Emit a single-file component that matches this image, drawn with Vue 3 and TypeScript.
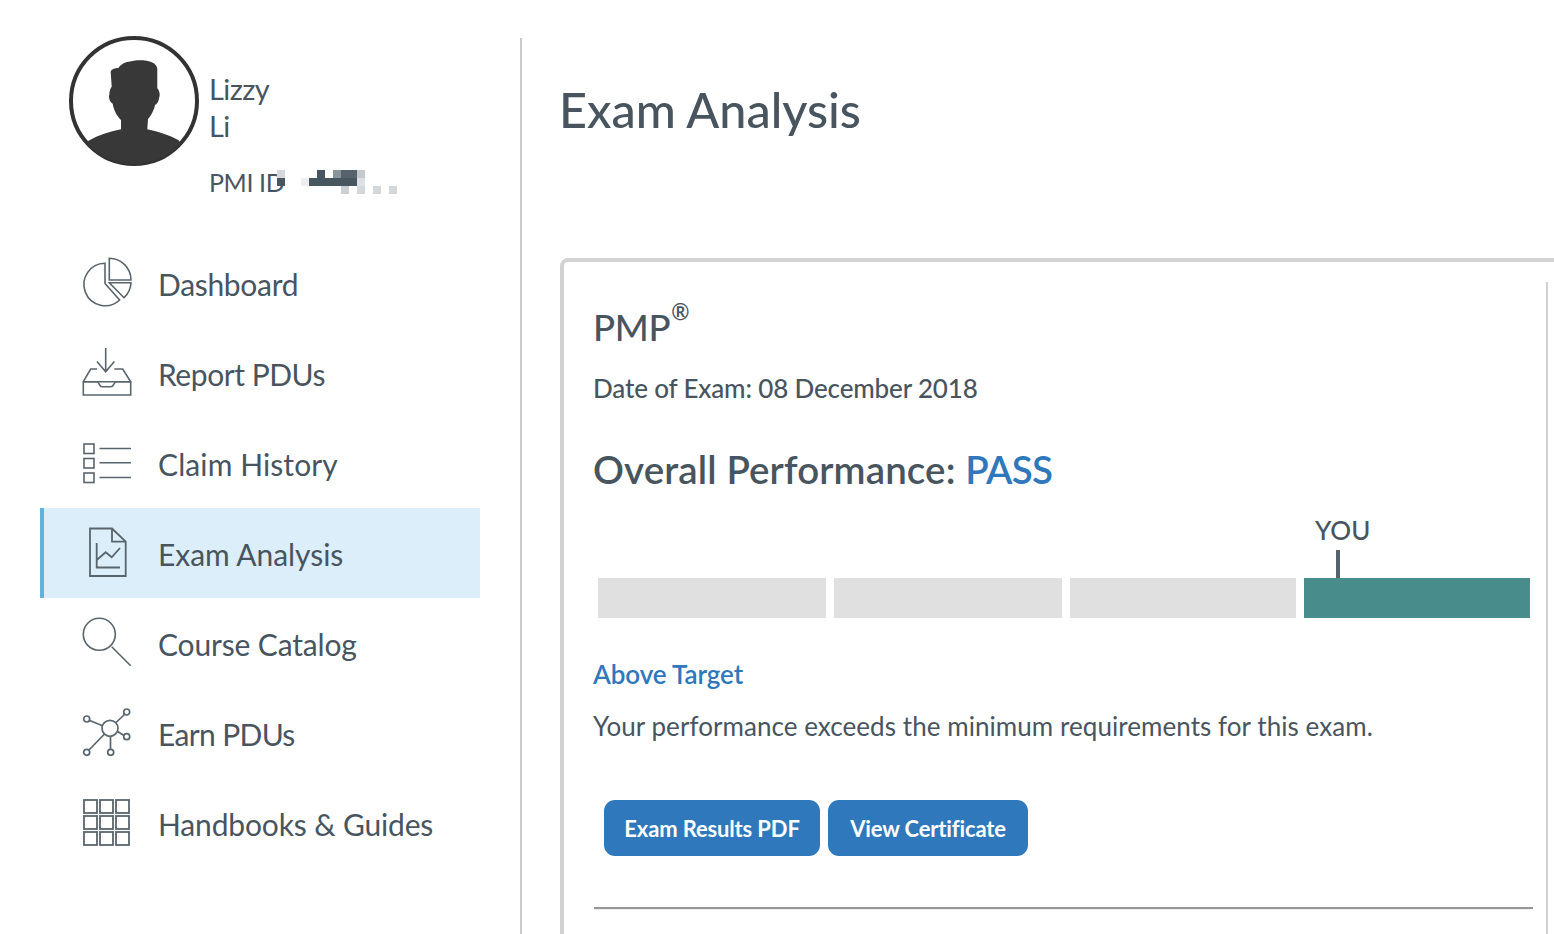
<script setup lang="ts">
interface NavItem { label: string; icon: string; spacing: number; active?: boolean }
const nav: NavItem[] = [
  { label: 'Dashboard', icon: 'pie', spacing: -0.3 },
  { label: 'Report PDUs', icon: 'inbox', spacing: -0.45 },
  { label: 'Claim History', icon: 'list', spacing: 0.1 },
  { label: 'Exam Analysis', icon: 'doc', spacing: -0.05, active: true },
  { label: 'Course Catalog', icon: 'search', spacing: -0.15 },
  { label: 'Earn PDUs', icon: 'net', spacing: -0.65 },
  { label: 'Handbooks & Guides', icon: 'grid', spacing: -0.15 },
]
const pixels = [
  [0, 0, 8, 8, '#d5d9dd'], [0, 8, 8, 8, '#48565f'], [24, 8, 8, 8, '#eceef0'],
  [32, 8, 24, 8, '#48565f'], [40, 0, 8, 8, '#48565f'], [56, 8, 8, 8, '#48565f'], [56, 0, 8, 8, '#8a949b'],
  [64, 0, 16, 8, '#56636c'], [64, 8, 16, 8, '#48565f'], [80, 0, 8, 8, '#c4c9cd'], [80, 8, 8, 8, '#dde0e2'],
  [64, 16, 8, 8, '#ccd0d3'], [80, 16, 8, 8, '#d5d8da'], [96, 16, 8, 8, '#d5d8da'], [112, 16, 8, 8, '#d5d8da'],
] as [number, number, number, number, string][]
</script>

<template>
  <div class="page">
    <aside class="side">
      <div class="profile">
        <svg class="avatar" viewBox="0 0 130 130" width="130" height="130">
          <defs><clipPath id="av"><circle cx="65" cy="65" r="63" /></clipPath></defs>
          <circle cx="65" cy="65" r="63" fill="#fff" stroke="#333" stroke-width="4" />
          <path clip-path="url(#av)" fill="#383838" d="M41.700 36C42 33 46 32 49.300 32C53 27 57 26 61 25.500C67 24 72 24 77.700 24.700C83 25.500 88 28 88.300 33L88.300 52.300C91 55 91 60 90.300 61C90 65 88 68 86 69C85 74 82 80 79 83L78.300 93.300C90 96 100 99 109.300 104L130 130L0 130L19.500 104.700C30 99 40 96 52 93.300L52 84C48 80 45 75 43.700 67.700C40 66 39.500 60 40.300 59C40.300 55 41.500 52 42.700 50.700Z" />
        </svg>
        <div class="who">
          <div class="name">Lizzy</div>
          <div class="name">Li</div>
        </div>
        <div class="pmi">
          <span>PMI ID</span>
          <svg class="mosaic" width="120" height="24" viewBox="0 0 120 24">
            <rect v-for="(p, i) in pixels" :key="i" :x="p[0]" :y="p[1]" :width="p[2]" :height="p[3]" :fill="p[4]" />
          </svg>
        </div>
      </div>
      <nav class="nav">
        <a v-for="item in nav" :key="item.label" class="row" :class="{ on: item.active }">
          <svg class="ico" viewBox="0 0 50 50" width="50" height="50" fill="none" stroke="#59656d" stroke-width="1.6">
            <g :transform="item.active ? undefined : 'translate(0 2)'">
              <template v-if="item.icon === 'pie'">
                <path d="M24 3.300A21.200 21.200 0 1 0 38.600 40L24 23.500Z" />
                <path d="M28.300 -1.700A21.700 21.700 0 0 1 50 20H28.300Z" />
                <path d="M28.300 22.700H50A22 22 0 0 1 43 37.700Z" />
              </template>
              <template v-else-if="item.icon === 'inbox'">
                <path d="M2.300 45V31.700H49.700V45Z" />
                <path d="M2.300 31.700L9.700 19H16M33.300 19H41.700L49.700 31.700" />
                <path d="M2.300 31.700H16C18 31.700 18 36.700 21 36.700H30C33 36.700 33 31.700 35 31.700H49.700" />
                <path d="M24.700 -2V21.700M16 11.600L24.700 21.700L33.300 11.600" />
              </template>
              <template v-else-if="item.icon === 'list'">
                <rect x="3" y="4" width="10" height="9.500" />
                <rect x="3" y="18.500" width="10" height="9.500" />
                <rect x="3" y="33" width="10" height="9.500" />
                <path d="M18.500 8.500H50M18.500 22.800H50M18.500 37.500H50" />
              </template>
              <template v-else-if="item.icon === 'doc'">
                <path d="M9 0.500H31L44.700 13.700V48H9Z" stroke-width="1.800" />
                <path d="M31 0.500V13.700H44.700" stroke-width="1.800" />
                <path d="M15.700 15V39.500H39" stroke-width="1.800" />
                <path d="M15.700 32L24.700 24.300L30.700 29.300L39 20" stroke-width="1.800" />
              </template>
              <template v-else-if="item.icon === 'search'">
                <circle cx="18.300" cy="14.300" r="16" />
                <path d="M30.700 26.700L49.700 45.700" />
              </template>
              <template v-else-if="item.icon === 'net'">
                <circle cx="29" cy="18.300" r="8" stroke-width="1.700" />
                <circle cx="5.700" cy="9" r="3" stroke-width="1.700" />
                <circle cx="45.700" cy="2" r="3" stroke-width="1.700" />
                <circle cx="45.700" cy="26.700" r="3" stroke-width="1.700" />
                <circle cx="5.700" cy="42.300" r="3" stroke-width="1.700" />
                <circle cx="29.700" cy="42.300" r="3" stroke-width="1.700" />
                <path d="M8.700 10.500L21.500 15.800M35 12.500L43.500 4.500M36.500 21.500L43 25.500M23.500 24L8 40M29.500 26.300V39.300" stroke-width="1.700" />
              </template>
              <template v-else>
                <g stroke-width="1.800">
                  <rect x="3" y="0" width="13" height="13" /><rect x="19" y="0" width="13" height="13" /><rect x="35" y="0" width="13" height="13" />
                  <rect x="3" y="16" width="13" height="13" /><rect x="19" y="16" width="13" height="13" /><rect x="35" y="16" width="13" height="13" />
                  <rect x="3" y="32" width="13" height="13" /><rect x="19" y="32" width="13" height="13" /><rect x="35" y="32" width="13" height="13" />
                </g>
              </template>
            </g>
          </svg>
          <span class="lbl" :style="{ letterSpacing: item.spacing + 'px' }">{{ item.label }}</span>
        </a>
      </nav>
    </aside>
    <main class="main">
      <h1 class="title">Exam Analysis</h1>
      <section class="card">
        <div class="inner">
          <h2 class="pmp">PMP<sup>®</sup></h2>
          <p class="date">Date of Exam: 08 December 2018</p>
          <h3 class="overall">Overall Performance: <span class="blue">PASS</span></h3>
          <div class="meter">
            <div class="you">YOU</div>
            <div class="tick"></div>
            <div class="bars">
              <div class="seg"></div>
              <div class="seg"></div>
              <div class="seg s3"></div>
              <div class="seg hit"></div>
            </div>
          </div>
          <div class="target">Above Target</div>
          <p class="desc">Your performance exceeds the minimum requirements for this exam.</p>
          <div class="btns">
            <button class="btn b1">Exam Results PDF</button>
            <button class="btn b2">View Certificate</button>
          </div>
          <div class="rule"></div>
        </div>
      </section>
    </main>
  </div>
</template>

<style>
html, body { margin: 0; background: #fff; overflow: hidden; }
</style>

<style scoped>
.page {
  display: flex;
  width: 1554px;
  height: 934px;
  overflow: hidden;
  font-family: Lato, "Noto Sans", sans-serif;
  color: #48555f;
  box-sizing: border-box;
  padding-top: 38px;
}
.side {
  width: 520px;
  flex: none;
  border-right: 2px solid #c9cbcd;
  box-sizing: content-box;
}
.profile {
  position: relative;
  height: 202px;
  padding-left: 69px;
}
.avatar { display: block; margin-top: -2px; }
.who {
  position: absolute;
  left: 209px;
  top: 34px;
  font-size: 29px;
  line-height: 37px;
  letter-spacing: -0.6px;
}
.name { height: 37px; }
.pmi {
  position: absolute;
  left: 209px;
  top: 130px;
  display: flex;
  font-size: 25px;
  line-height: 32px;
  letter-spacing: -0.4px;
  align-items: flex-start;
}
.mosaic { position: absolute; left: 68px; top: 4px; }
.nav { padding-left: 40px; width: 440px; }
.row {
  display: flex;
  align-items: center;
  height: 90px;
  padding-left: 41px;
  box-sizing: border-box;
}
.row.on { background: #dceef9; border-left: 4px solid #5fb3dc; padding-left: 37px; }
.ico { flex: none; margin-right: 27px; overflow: visible; }
.lbl { font-size: 30px; white-space: nowrap; position: relative; top: 1px; }
.main { padding-left: 38px; flex: 1; min-width: 0; margin-top: -38px; }
.title {
  margin: 0 0 0 -1px;
  padding-top: 78px;
  height: 258px;
  box-sizing: border-box;
  font-size: 48.5px;
  line-height: 62px;
  font-weight: 500;
}
.card {
  width: 1100px;
  height: 800px;
  border: 4px solid #d2d2d2;
  border-radius: 8px;
  box-sizing: border-box;
  padding: 20px 0 0 29px;
  position: relative;
}
.card::after {
  content: "";
  position: absolute;
  left: 982px;
  top: 20px;
  bottom: 0;
  width: 2px;
  background: #d0d0d0;
}
.inner { width: 940px; }
.pmp { margin: 0; padding-top: 18px; height: 72px; font-size: 36.5px; font-weight: 500; line-height: 54px; letter-spacing: -0.3px; box-sizing: border-box; }
.pmp sup { font-size: 22px; font-weight: 600; line-height: 0; position: relative; top: -8px; vertical-align: super; margin-left: 1px; }
.date { margin: 0; padding-top: 16px; height: 61px; box-sizing: border-box; font-size: 26px; line-height: 36px; font-weight: 500; letter-spacing: -0.15px; }
.overall { margin: 0; padding-top: 28px; height: 95px; box-sizing: border-box; font-size: 38.5px; line-height: 52px; font-weight: 600; letter-spacing: 0.12px; }
.blue { color: #2f78bb; font-weight: 600; letter-spacing: -0.8px; }
.meter { position: relative; margin-left: 5px; height: 80px; margin-top: 6px; }
.you { position: absolute; left: 717px; top: -2px; font-size: 26px; line-height: 32px; font-weight: 500; }
.tick { position: absolute; left: 738px; top: 34px; width: 4px; height: 28px; background: #56636c; }
.bars { position: absolute; left: 0; top: 62px; height: 40px; display: flex; gap: 8px; width: 932px; }
.seg { width: 228px; background: #e0e0e0; }
.seg.s3 { width: 226px; }
.seg.hit { width: 226px; background: #488d8b; }
.target { margin-top: 59px; color: #2f78bb; font-size: 26px; line-height: 38px; font-weight: 600; letter-spacing: -0.1px; }
.desc { margin: 15px 0 0; font-size: 26px; line-height: 36px; white-space: nowrap; letter-spacing: 0.06px; }
.btns { display: flex; gap: 8px; margin: 56px 0 0 11px; }
.btn {
  height: 56px;
  border: none;
  border-radius: 11px;
  background: #2f78bb;
  color: #fff;
  font-family: inherit;
  font-size: 22px;
  font-weight: 700;
  letter-spacing: -0.15px;
  padding: 0;
}
.b1 { width: 216px; }
.b2 { width: 200px; }
.rule { margin: 51px 0 0 1px; width: 939px; height: 2px; background: #979797; border-bottom: 1px solid #eee; }
</style>
